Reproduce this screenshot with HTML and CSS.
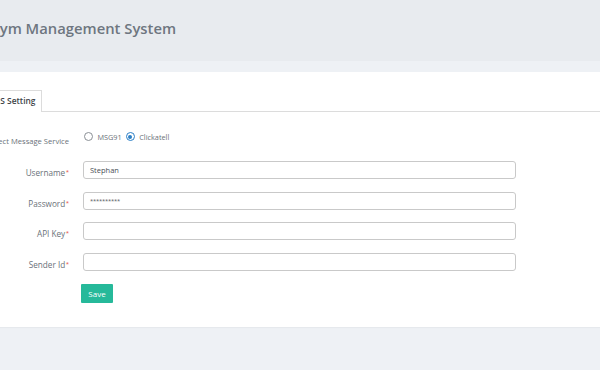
FILE: index.html
```html
<!DOCTYPE html>
<html lang="en">
<head>
<meta charset="utf-8">
<title>SMS Setting</title>
<link rel="stylesheet" href="styles.css">
</head>
<body>
<div class="page">
  <header class="topbar">
    <h1 class="title">Gym Management System</h1>
  </header>
  <main class="content">
    <section class="card">
      <ul class="tabs">
        <li class="tab active">SMS Setting</li>
      </ul>
      <form class="form">
        <div class="row">
          <label class="lbl lbl-sel">Select Message Service</label>
          <div class="radios">
            <span class="radio"></span><span class="opt">MSG91</span>
            <span class="radio checked"></span><span class="opt">Clickatell</span>
          </div>
        </div>
        <div class="row">
          <label class="lbl">Username<span class="req">*</span></label>
          <div class="input">Stephan</div>
        </div>
        <div class="row">
          <label class="lbl">Password<span class="req">*</span></label>
          <div class="input secret">**********</div>
        </div>
        <div class="row">
          <label class="lbl">API Key<span class="req">*</span></label>
          <div class="input"></div>
        </div>
        <div class="row">
          <label class="lbl">Sender Id<span class="req">*</span></label>
          <div class="input"></div>
        </div>
        <div class="row">
          <span class="lbl"></span>
          <div class="actions"><button type="button" class="btn">Save</button></div>
        </div>
      </form>
    </section>
  </main>
</div>
</body>
</html>
```
FILE: styles.css
```css
html, body {
  margin: 0;
  padding: 0;
}
body {
  width: 600px;
  height: 370px;
  overflow: hidden;
  background: #eef1f5;
  font-family: "Open Sans", "Liberation Sans", sans-serif;
  color: #6b7480;
}
.page {
  display: flex;
  flex-direction: column;
}
.topbar {
  height: 61px;
  background: #e8ebef;
  display: flex;
  align-items: center;
}
.title {
  margin: 0 0 0 -11px;
  font-size: 14.8px;
  font-weight: 600;
  color: #6e7680;
  line-height: 20px;
  padding-bottom: 6px;
  white-space: nowrap;
}
.content {
  padding-top: 11px;
}
.card {
  background: #fff;
  margin-left: -30px;
  width: 700px;
  padding: 18px 0 25.7px 0;
  box-shadow: 0 1px 1px rgba(0, 0, 0, 0.03);
}
.tabs {
  list-style: none;
  margin: 0;
  padding: 0 0 0 12px;
  height: 21px;
  border-bottom: 1px solid #dcdcdc;
  display: flex;
}
.tab {
  box-sizing: border-box;
  height: 22px;
  margin-bottom: -1px;
  padding: 0 6px 0 5px;
  border: 1px solid #dcdcdc;
  border-bottom: none;
  background: #fff;
  font-size: 8.4px;
  font-weight: 600;
  color: #3d4348;
  line-height: 20px;
  white-space: nowrap;
}
.form {
  margin-top: 18.3px;
  display: flex;
  flex-direction: column;
  gap: 12.67px;
}
.row {
  display: grid;
  grid-template-columns: 99px 433px;
  column-gap: 14px;
  height: 18px;
}
.lbl {
  text-align: right;
  font-size: 8.2px;
  line-height: 18px;
  padding-top: 2px;
  color: #6a7179;
  white-space: nowrap;
}
.lbl-sel {
  font-size: 7.6px;
}
.req {
  color: #e74c3c;
  font-size: 6px;
  vertical-align: 2px;
  margin-left: 0.5px;
}
.radios {
  display: flex;
  align-items: center;
  height: 13px;
  padding-left: 1px;
  font-size: 7.3px;
  color: #6a7179;
}
.radio {
  width: 9px;
  height: 9px;
  box-sizing: border-box;
  border: 1px solid #8a8f95;
  border-radius: 50%;
  display: flex;
  align-items: center;
  justify-content: center;
  margin-right: 4.5px;
}
.radio.checked {
  border-color: #2b7fc6;
}
.radio.checked::after {
  content: "";
  width: 4px;
  height: 4px;
  border-radius: 50%;
  background: #2b7fc6;
}
.opt {
  margin-right: 4px;
}
.input {
  box-sizing: border-box;
  height: 18px;
  border: 1px solid #c9c9c9;
  border-radius: 3px;
  padding: 0 6px;
  font-size: 7.5px;
  line-height: 16px;
  color: #4a4f55;
}
.input.secret {
  font-size: 5.8px;
  letter-spacing: -0.2px;
  color: #555a60;
}
.actions {
  display: flex;
}
.btn {
  margin-left: -2px;
  height: 19px;
  width: 32px;
  padding: 0;
  border: none;
  border-radius: 1px;
  background: #26b99a;
  color: #fff;
  font-family: "Open Sans", "Liberation Sans", sans-serif;
  font-size: 8px;
  line-height: 19px;
}
```
